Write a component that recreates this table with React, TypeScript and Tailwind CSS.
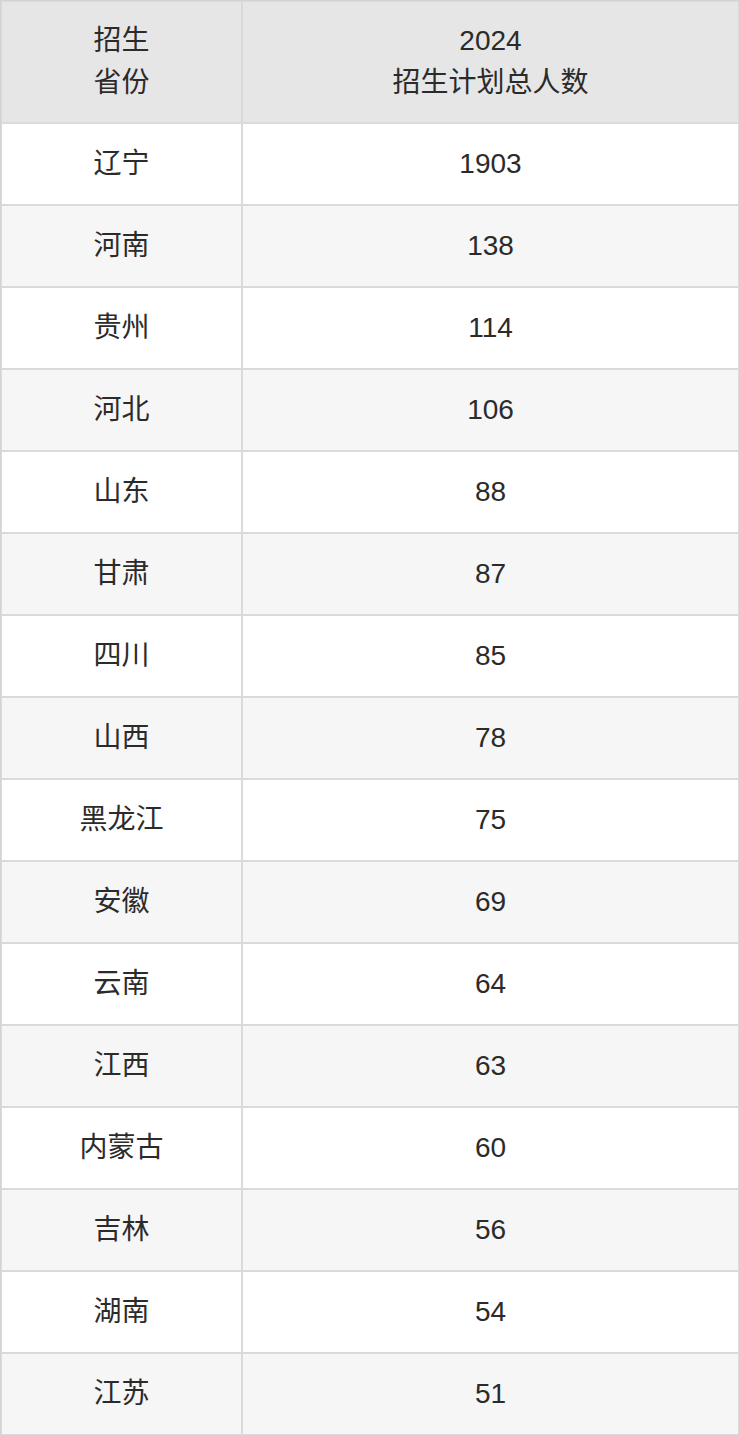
const rows: [string, string][] = [
  ['辽宁', '1903'],
  ['河南', '138'],
  ['贵州', '114'],
  ['河北', '106'],
  ['山东', '88'],
  ['甘肃', '87'],
  ['四川', '85'],
  ['山西', '78'],
  ['黑龙江', '75'],
  ['安徽', '69'],
  ['云南', '64'],
  ['江西', '63'],
  ['内蒙古', '60'],
  ['吉林', '56'],
  ['湖南', '54'],
  ['江苏', '51'],
];

const cell = 'border border-[#dadada] text-center align-middle p-0';

export default function App() {
  return (
    <div className="w-[740px] bg-white font-['Liberation_Sans','Noto_Sans_CJK_SC',sans-serif] text-[28px] leading-[1.5] text-[#2b2b2b]">
      <table className="w-[740px] table-fixed border-separate border-spacing-0 border border-[#d4d4d4]">
        <colgroup>
          <col className="w-[241px]" />
          <col />
        </colgroup>
        <thead>
          <tr className="bg-[#e6e6e6]">
            <th className={`${cell} h-[122px] font-normal`}>
              招生
              <br />
              省份
            </th>
            <th className={`${cell} h-[122px] font-normal`}>
              2024
              <br />
              招生计划总人数
            </th>
          </tr>
        </thead>
        <tbody>
          {rows.map(([province, count], i) => (
            <tr key={province} className={i % 2 === 0 ? 'bg-white' : 'bg-[#f6f6f6]'}>
              <td className={`${cell} h-[82px]`}>{province}</td>
              <td className={`${cell} h-[82px]`}>{count}</td>
            </tr>
          ))}
        </tbody>
      </table>
    </div>
  );
}
